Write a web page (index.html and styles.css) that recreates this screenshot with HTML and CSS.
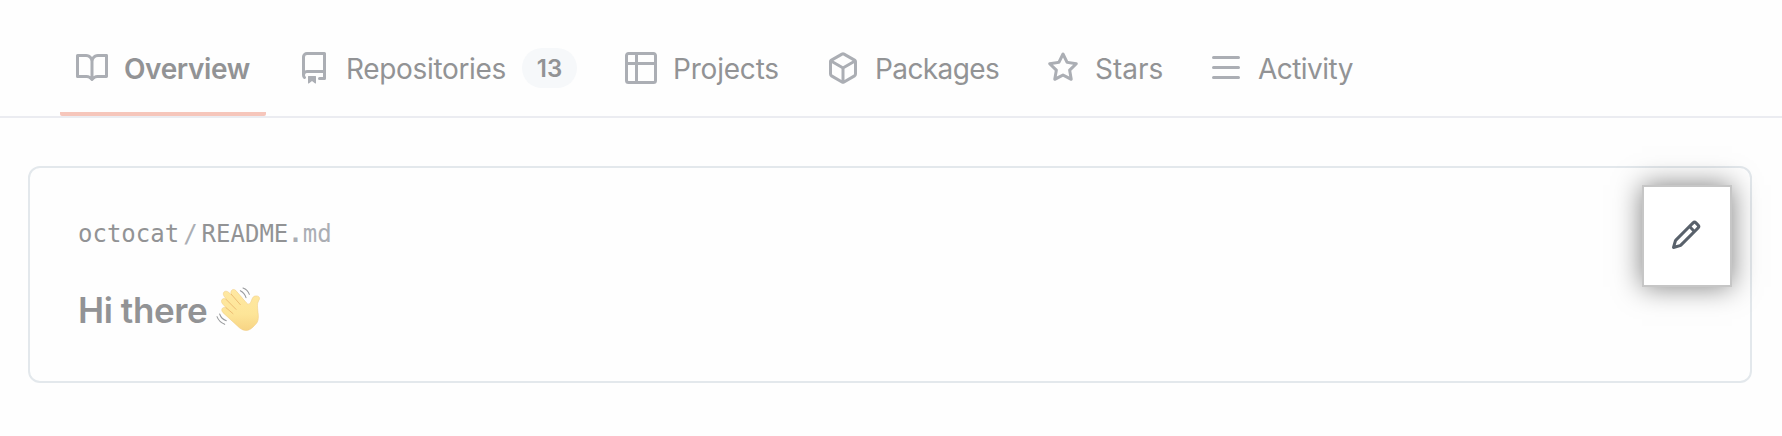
FILE: index.html
```html
<!DOCTYPE html>
<html lang="en">
<head>
<meta charset="utf-8">
<title>octocat</title>
<link rel="stylesheet" href="styles.css">
</head>
<body>
<nav class="tabs">
  <a class="tab tab-overview selected">
    <svg class="icon" viewBox="0 0 16 16"><path d="M0 1.75A.75.75 0 0 1 .75 1h4.253c1.227 0 2.317.59 3 1.501A3.743 3.743 0 0 1 11.006 1h4.245a.75.75 0 0 1 .75.75v10.5a.75.75 0 0 1-.75.75h-4.507a2.25 2.25 0 0 0-1.591.659l-.622.621a.75.75 0 0 1-1.06 0l-.622-.621A2.25 2.25 0 0 0 5.258 13H.75a.75.75 0 0 1-.75-.75Zm7.251 10.324.004-5.073-.002-2.253A2.25 2.25 0 0 0 5.003 2.5H1.5v9h3.757a3.75 3.75 0 0 1 1.994.574ZM8.755 4.75l-.004 7.322a3.752 3.752 0 0 1 1.992-.572H14.5v-9h-3.495a2.25 2.25 0 0 0-2.25 2.25Z"/></svg>
    <span class="label">Overview</span>
  </a>
  <a class="tab tab-repos">
    <svg class="icon" viewBox="0 0 16 16"><path d="M2 2.5A2.5 2.5 0 0 1 4.5 0h8.75a.75.75 0 0 1 .75.75v12.5a.75.75 0 0 1-.75.75h-2.5a.75.75 0 0 1 0-1.5h1.75v-2h-8a1 1 0 0 0-.714 1.7.75.75 0 1 1-1.072 1.05A2.495 2.495 0 0 1 2 11.5Zm10.5-1h-8a1 1 0 0 0-1 1v6.708A2.486 2.486 0 0 1 4.5 9h8ZM5 12.25a.25.25 0 0 1 .25-.25h3.5a.25.25 0 0 1 .25.25v3.25a.25.25 0 0 1-.4.2l-1.45-1.087a.249.249 0 0 0-.3 0L5.4 15.7a.25.25 0 0 1-.4-.2Z"/></svg>
    <span class="label">Repositories</span>
    <span class="counter">13</span>
  </a>
  <a class="tab tab-projects">
    <svg class="icon" viewBox="0 0 16 16"><path d="M0 1.75C0 .784.784 0 1.75 0h12.5C15.216 0 16 .784 16 1.75v12.5A1.75 1.75 0 0 1 14.25 16H1.75A1.75 1.75 0 0 1 0 14.25ZM6.5 6.5v8h7.75a.25.25 0 0 0 .25-.25V6.5Zm8-1.5V1.75a.25.25 0 0 0-.25-.25H6.5V5Zm-13 1.5v7.75c0 .138.112.25.25.25H5v-8ZM5 5V1.5H1.75a.25.25 0 0 0-.25.25V5Z"/></svg>
    <span class="label">Projects</span>
  </a>
  <a class="tab tab-packages">
    <svg class="icon" viewBox="0 0 16 16"><path d="m8.878.392 5.25 3.045c.54.314.872.89.872 1.514v6.098a1.75 1.75 0 0 1-.872 1.514l-5.25 3.045a1.75 1.75 0 0 1-1.756 0l-5.25-3.045A1.75 1.75 0 0 1 1 11.049V4.951c0-.624.332-1.201.872-1.514L7.122.392a1.75 1.75 0 0 1 1.756 0ZM7.875 1.69l-4.63 2.685L8 7.133l4.755-2.758-4.63-2.685a.248.248 0 0 0-.25 0ZM2.5 5.677v5.372c0 .09.047.171.125.216l4.625 2.683V8.432Zm6.25 8.271 4.625-2.683a.25.25 0 0 0 .125-.216V5.677L8.75 8.432Z"/></svg>
    <span class="label">Packages</span>
  </a>
  <a class="tab tab-stars">
    <svg class="icon" viewBox="0 0 16 16"><path d="M8 .25a.75.75 0 0 1 .673.418l1.882 3.815 4.21.612a.75.75 0 0 1 .416 1.279l-3.046 2.97.719 4.192a.751.751 0 0 1-1.088.791L8 12.347l-3.766 1.98a.75.75 0 0 1-1.088-.79l.72-4.194L.818 6.374a.75.75 0 0 1 .416-1.28l4.21-.611L7.327.668A.75.75 0 0 1 8 .25Zm0 2.445L6.615 5.5a.75.75 0 0 1-.564.41l-3.097.45 2.24 2.184a.75.75 0 0 1 .216.664l-.528 3.084 2.769-1.456a.75.75 0 0 1 .698 0l2.77 1.456-.53-3.084a.75.75 0 0 1 .216-.664l2.24-2.183-3.096-.45a.75.75 0 0 1-.564-.41L8 2.694Z"/></svg>
    <span class="label">Stars</span>
  </a>
  <a class="tab tab-activity">
    <svg class="icon" viewBox="0 0 16 16"><path d="M1 2.75A.75.75 0 0 1 1.75 2h12.5a.75.75 0 0 1 0 1.5H1.75A.75.75 0 0 1 1 2.75Zm0 5A.75.75 0 0 1 1.75 7h12.5a.75.75 0 0 1 0 1.5H1.75A.75.75 0 0 1 1 7.75ZM1.75 12h12.5a.75.75 0 0 1 0 1.5H1.75a.75.75 0 0 1 0-1.5Z"/></svg>
    <span class="label">Activity</span>
  </a>
</nav>
<main class="card">
  <div class="readme">
    <p class="path">octocat<span class="slash">/</span>README<span class="ext"><b>.</b>md</span></p>
    <h3 class="title"><span class="greeting">Hi there</span>
      <svg class="wave" viewBox="42 42 144 144" role="img" aria-label="waving hand">
        <defs>
          <linearGradient id="skin" x1="0" y1="0" x2="0" y2="1"><stop offset="0" stop-color="#ffe8a2"/><stop offset=".6" stop-color="#fde598"/><stop offset="1" stop-color="#f7d484"/></linearGradient>
        </defs>
        <path fill="url(#skin)" stroke="#efc87c" stroke-width="1.5" d="M95 72C88 62 97 50 107 58L138 94Q144 103 149 98C156 91 155 76 166 75C177 73 182 81 176 89C170 99 173 109 174 124C177 145 174 155 163 164C150 179 136 184 119 171L69 125C60 115 69 105 79 111L68 99C59 88 69 77 80 86L74 78C64 67 74 54 86 64Z"/>
        <g fill="none" stroke="#edbd74" stroke-width="3" stroke-linecap="round"><path d="M94 70l27 31M79 86l29 29M78 110l21 18"/></g>
        <g fill="none" stroke="#999b9e" stroke-width="3.2" stroke-linecap="round"><path d="M129 51Q143 56 148 70M121 59Q134 66 138 80M59 129Q64 144 79 149M51 137Q57 153 74 160"/></g>
      </svg>
    </h3>
  </div>
  <button class="edit" aria-label="Edit">
    <svg class="pencil" viewBox="0 0 16 16"><path d="M11.013 1.427a1.75 1.75 0 0 1 2.474 0l1.086 1.086a1.75 1.75 0 0 1 0 2.474l-8.61 8.61c-.21.21-.47.364-.756.445l-3.251.93a.75.75 0 0 1-.927-.928l.929-3.25c.081-.286.235-.547.445-.758l8.61-8.61Zm.176 4.823L9.75 4.81l-6.286 6.287a.253.253 0 0 0-.064.108l-.558 1.953 1.953-.558a.253.253 0 0 0 .108-.064Zm1.238-3.763a.25.25 0 0 0-.354 0L10.811 3.75l1.439 1.44 1.263-1.263a.25.25 0 0 0 0-.354Z"/></svg>
  </button>
</main>
</body>
</html>
```
FILE: styles.css
```css
* { box-sizing: border-box; }
body {
  margin: 0;
  height: 436px;
  background: #fefefe;
  color: #929395;
  font-family: Inter, "Liberation Sans", sans-serif;
}
.tabs {
  display: flex;
  height: 118px;
  padding: 20px 0 0 60px;
  border-bottom: 2px solid #ebecf1;
}
.tab {
  display: flex;
  flex: none;
  align-items: center;
  height: 96px;
  padding-left: 16px;
  font-size: 28px;
  line-height: 40px;
  white-space: nowrap;
}
.label { padding-top: 1px; }
.icon { width: 32px; height: 32px; flex: none; margin-right: 16px; fill: #abaeb4; }
.tab-overview { width: 206px; border-bottom: 4px solid #f6c6bb; padding-top: 4px; }
.selected { border-radius: 0 0 2px 2px; }
.selected .label { font-weight: 600; letter-spacing: -0.4px; }
.tab-repos { width: 327px; margin-left: 16px; }
.tab-repos .label { width: 160px; letter-spacing: -0.33px; }
.tab-projects { width: 202px; }
.tab-projects .label { letter-spacing: -0.2px; }
.tab-packages { width: 220px; }
.tab-packages .label { letter-spacing: -0.6px; }
.tab-stars { width: 163px; }
.tab-activity { width: 170px; }
.tab-activity .label { letter-spacing: -0.55px; }
.counter {
  width: 55px;
  height: 40px;
  margin-left: 16px;
  padding-top: 1px;
  border-radius: 20px;
  background: #f6f8fa;
  font-size: 24px;
  font-weight: 600;
  text-align: center;
}
.card {
  display: flex;
  justify-content: space-between;
  width: 1724px;
  height: 217px;
  margin: 48px 0 0 28px;
  padding: 17px 18px 0 48px;
  border: 2px solid #e3e8ec;
  border-radius: 12px;
}
.path {
  margin: 31px 0 0;
  font: 24px/36px "DejaVu Sans Mono", monospace;
}
.slash { margin: 0 4px; color: #abaeb4; }
.ext { color: #abaeb4; }
.title {
  display: flex;
  align-items: center;
  height: 48px;
  margin: 34px 0 0;
  font-size: 35px;
  font-weight: 600;
  line-height: 48px;
  white-space: nowrap;
}
.greeting { width: 136px; letter-spacing: -0.4px; }
.wave { width: 48px; height: 48px; flex: none; margin-bottom: 3px; }
.edit {
  display: flex;
  align-items: center;
  justify-content: center;
  width: 90px;
  height: 102px;
  padding: 0 2px 2px 0;
  border: 2px solid #c6c6c6;
  background: #fff;
  box-shadow: 0 0 26px rgba(0, 0, 0, 0.5);
}
.pencil { width: 32px; height: 32px; fill: #59616b; }
```
